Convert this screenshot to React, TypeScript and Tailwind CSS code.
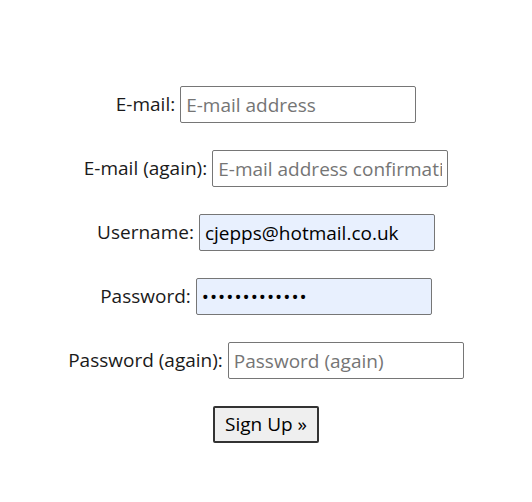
const rows = [
  { label: "E-mail:", placeholder: "E-mail address", value: "", type: "text" },
  { label: "E-mail (again):", placeholder: "E-mail address confirmation", value: "", type: "text" },
  { label: "Username:", placeholder: "Username", value: "cjepps@hotmail.co.uk", type: "text" },
  { label: "Password:", placeholder: "Password", value: "abcdefghijklm", type: "password" },
  { label: "Password (again):", placeholder: "Password (again)", value: "", type: "password" },
];

export default function App() {
  return (
    <div className="min-h-[502px] bg-white pt-[86px] text-[19px] text-[#1a1a1a] [font-family:'Open_Sans','Noto_Sans',sans-serif]">
      <form className="flex flex-col items-center gap-[27px]" onSubmit={(e) => e.preventDefault()}>
        {rows.map((r) => (
          <div key={r.label} className="flex items-center gap-[5px]">
            <label className="leading-none">{r.label}</label>
            <input
              type={r.type}
              placeholder={r.placeholder}
              defaultValue={r.value}
              readOnly
              className={`h-[37px] w-[236px] rounded-[2px] border border-[#767676] px-[5px] text-[19px] text-black outline-none placeholder:text-[#757575] ${
                r.value ? "bg-[#e8f0fe]" : "bg-white"
              } ${r.type === "password" && r.value ? "tracking-[1px]" : ""}`}
            />
          </div>
        ))}
        <button
          type="submit"
          className="h-[37px] w-[106px] rounded-[2px] border-2 border-[#333] bg-[#efefef] text-[19px] text-black"
        >
          Sign Up »
        </button>
      </form>
    </div>
  );
}
